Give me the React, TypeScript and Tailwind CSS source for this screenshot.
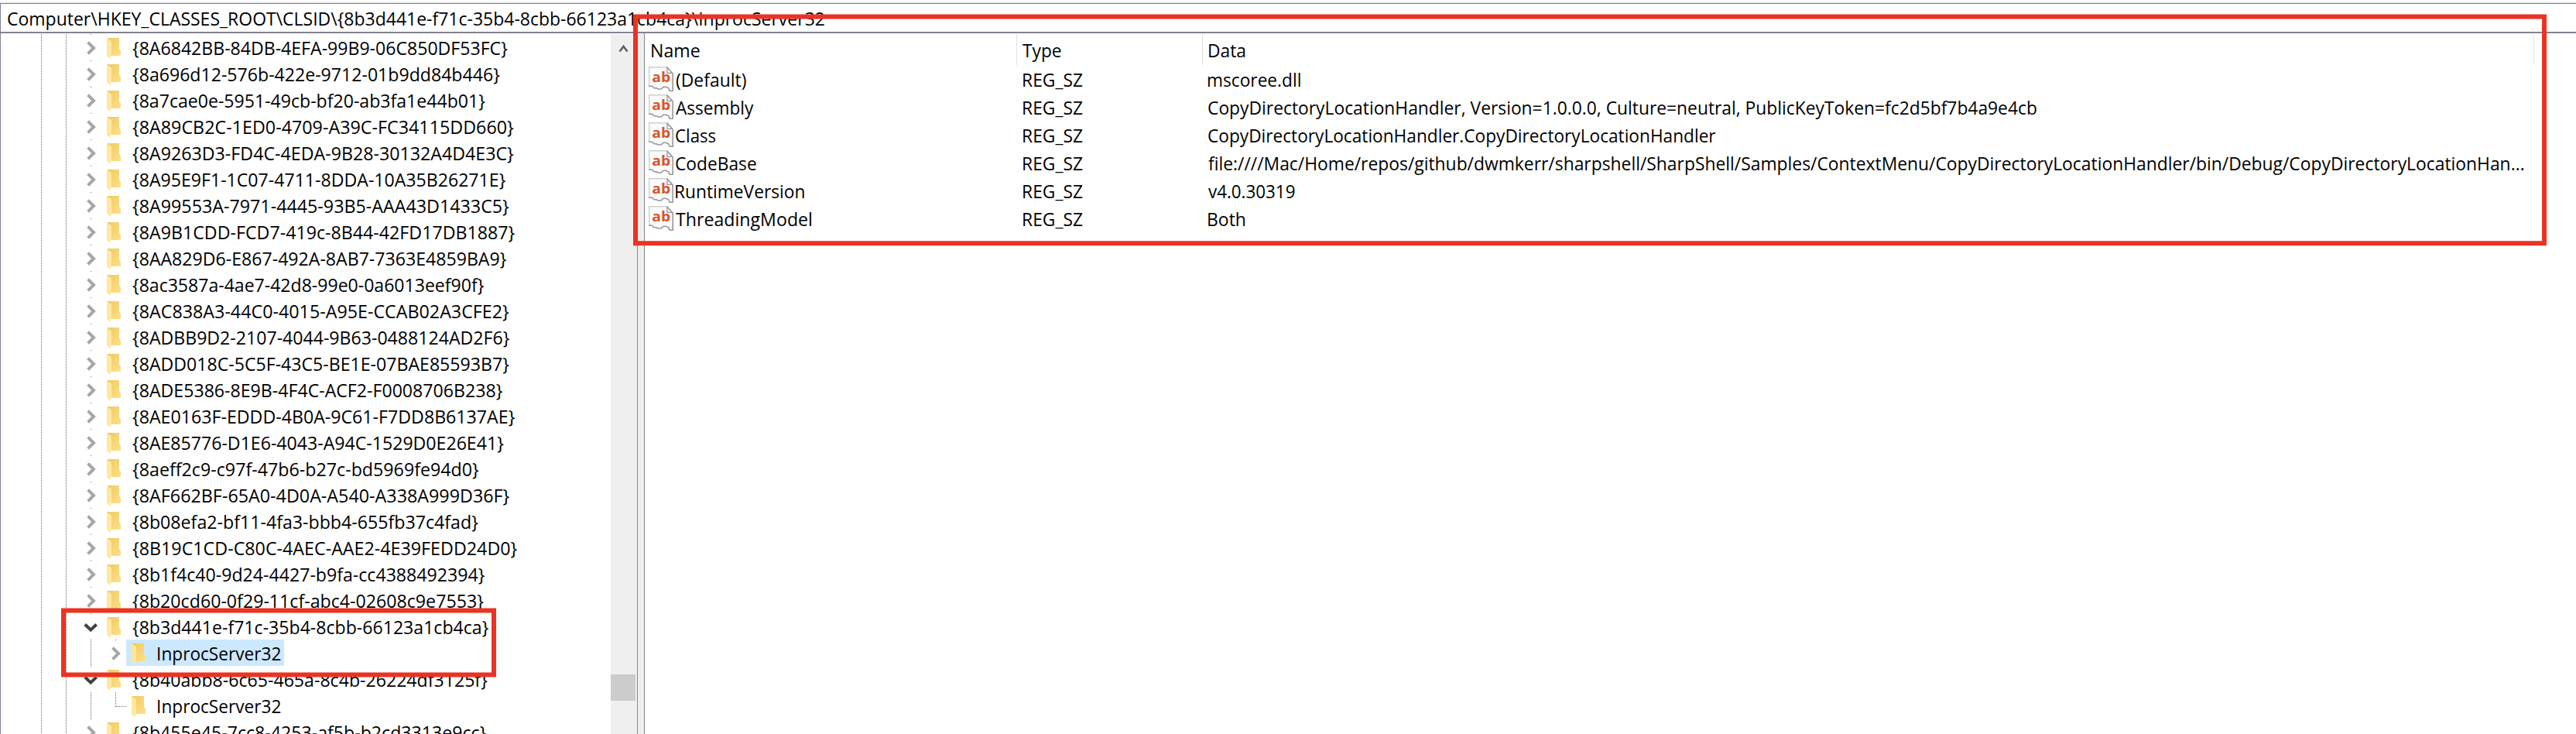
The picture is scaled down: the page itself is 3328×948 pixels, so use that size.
import { useLayoutEffect, useRef, useState } from "react";

type Kind = "closed" | "open" | "child" | "leaf";
type TreeNode = { label: string; width: number; kind: Kind; selected?: boolean };

const nodes: TreeNode[] = [
  { label: "{8A6842BB-84DB-4EFA-99B9-06C850DF53FC}", width: 485, kind: "closed" },
  { label: "{8a696d12-576b-422e-9712-01b9dd84b446}", width: 475, kind: "closed" },
  { label: "{8a7cae0e-5951-49cb-bf20-ab3fa1e44b01}", width: 456, kind: "closed" },
  { label: "{8A89CB2C-1ED0-4709-A39C-FC34115DD660}", width: 493, kind: "closed" },
  { label: "{8A9263D3-FD4C-4EDA-9B28-30132A4D4E3C}", width: 493, kind: "closed" },
  { label: "{8A95E9F1-1C07-4711-8DDA-10A35B26271E}", width: 482.5, kind: "closed" },
  { label: "{8A99553A-7971-4445-93B5-AAA43D1433C5}", width: 487, kind: "closed" },
  { label: "{8A9B1CDD-FCD7-419c-8B44-42FD17DB1887}", width: 494.5, kind: "closed" },
  { label: "{8AA829D6-E867-492A-8AB7-7363E4859BA9}", width: 483.5, kind: "closed" },
  { label: "{8ac3587a-4ae7-42d8-99e0-0a6013eef90f}", width: 454.5, kind: "closed" },
  { label: "{8AC838A3-44C0-4015-A95E-CCAB02A3CFE2}", width: 487, kind: "closed" },
  { label: "{8ADBB9D2-2107-4044-9B63-0488124AD2F6}", width: 487.5, kind: "closed" },
  { label: "{8ADD018C-5C5F-43C5-BE1E-07BAE85593B7}", width: 487, kind: "closed" },
  { label: "{8ADE5386-8E9B-4F4C-ACF2-F0008706B238}", width: 478.5, kind: "closed" },
  { label: "{8AE0163F-EDDD-4B0A-9C61-F7DD8B6137AE}", width: 494.5, kind: "closed" },
  { label: "{8AE85776-D1E6-4043-A94C-1529D0E26E41}", width: 480, kind: "closed" },
  { label: "{8aeff2c9-c97f-47b6-b27c-bd5969fe94d0}", width: 448, kind: "closed" },
  { label: "{8AF662BF-65A0-4D0A-A540-A338A999D36F}", width: 487.5, kind: "closed" },
  { label: "{8b08efa2-bf11-4fa3-bbb4-655fb37c4fad}", width: 447, kind: "closed" },
  { label: "{8B19C1CD-C80C-4AEC-AAE2-4E39FEDD24D0}", width: 497.5, kind: "closed" },
  { label: "{8b1f4c40-9d24-4427-b9fa-cc4388492394}", width: 455.5, kind: "closed" },
  { label: "{8b20cd60-0f29-11cf-abc4-02608c9e7553}", width: 454, kind: "closed" },
  { label: "{8b3d441e-f71c-35b4-8cbb-66123a1cb4ca}", width: 460.5, kind: "open" },
  { label: "InprocServer32", width: 159, kind: "child", selected: true },
  { label: "{8b40abb8-6c65-465a-8c4b-26224df3125f}", width: 459, kind: "open" },
  { label: "InprocServer32", width: 159, kind: "leaf" },
  { label: "{8b455e45-7cc8-4253-af5b-b2cd3313e9cc}", width: 457.5, kind: "closed" },
];

const values = [
  { name: "(Default)", nameWidth: 90.5, data: "mscoree.dll", dataWidth: 118.5 },
  { name: "Assembly", nameWidth: 100.5, data: "CopyDirectoryLocationHandler, Version=1.0.0.0, Culture=neutral, PublicKeyToken=fc2d5bf7b4a9e4cb", dataWidth: 1070.5 },
  { name: "Class", nameWidth: 52, data: "CopyDirectoryLocationHandler.CopyDirectoryLocationHandler", dataWidth: 656 },
  { name: "CodeBase", nameWidth: 103.5, data: "file:////Mac/Home/repos/github/dwmkerr/sharpshell/SharpShell/Samples/ContextMenu/CopyDirectoryLocationHandler/bin/Debug/CopyDirectoryLocationHan...", dataWidth: 1699.5 },
  { name: "RuntimeVersion", nameWidth: 166, data: "v4.0.30319", dataWidth: 112 },
  { name: "ThreadingModel", nameWidth: 175, data: "Both", dataWidth: 47.5 },
];

/* A single line of text condensed so that its glyphs span exactly `width` pixels. */
function Fit({ text, width }: { text: string; width: number }) {
  const ref = useRef<HTMLSpanElement>(null);
  const [transform, setTransform] = useState("none");
  useLayoutEffect(() => {
    const el = ref.current;
    const ctx = document.createElement("canvas").getContext("2d");
    if (!el || !ctx) return;
    const style = getComputedStyle(el);
    ctx.font = `${style.fontSize} ${style.fontFamily}`;
    const m = ctx.measureText(text);
    const ink = m.actualBoundingBoxLeft + m.actualBoundingBoxRight;
    setTransform(`scaleX(${width / ink}) translateX(${m.actualBoundingBoxLeft}px)`);
  }, [text, width]);
  return (
    <span className="block shrink-0 whitespace-nowrap" style={{ width }}>
      <span ref={ref} className="inline-block origin-left align-top" style={{ transform }}>
        {text}
      </span>
    </span>
  );
}

function Folder() {
  return (
    <svg width="20" height="34" viewBox="0 0 20 34" className="shrink-0">
      <defs>
        <linearGradient id="folderBack" x1="0" y1="0" x2="1" y2="1">
          <stop offset="0" stopColor="#f0c862" />
          <stop offset="1" stopColor="#fde08a" />
        </linearGradient>
        <linearGradient id="folderFlap" x1="0" y1="0" x2="1" y2="1">
          <stop offset="0" stopColor="#ffe794" />
          <stop offset="1" stopColor="#ffe9a3" />
        </linearGradient>
      </defs>
      <path d="M0 5H16V18.500L18 21.500V28H4V9Z" fill="url(#folderBack)" />
      <path d="M0 5L6 9.500V25.500L5 28V32L0 28.500Z" fill="url(#folderFlap)" />
    </svg>
  );
}

function Toggle({ kind }: { kind: Kind }) {
  return (
    <svg width="23" height="34" viewBox="0 0 23 34" className="shrink-0">
      {kind === "leaf" ? (
        <path d="M9.500 0V19M10 18.500H23" fill="none" stroke="#6a6a6a" strokeDasharray="1 1" />
      ) : (
        <rect x="9" y="0" width="1" height="1" fill="#6a6a6a" />
      )}
      {(kind === "closed" || kind === "child") && (
        <path d="M5.600 10.600L13 18L5.600 25.400" fill="none" stroke="#a6a6a6" strokeWidth="4" />
      )}
      {kind === "open" && (
        <path d="M1.800 14.500L9.200 21.600L16.600 14.500" fill="none" stroke="#404040" strokeWidth="4" />
      )}
    </svg>
  );
}

function Dots() {
  return <div className="w-px shrink-0 bg-[repeating-linear-gradient(180deg,#6a6a6a_0px,#6a6a6a_1px,transparent_1px,transparent_2px)]" />;
}

function TreeRow({ node }: { node: TreeNode }) {
  const nested = node.kind === "child" || node.kind === "leaf";
  return (
    <div className="flex h-[34px] shrink-0 pl-[52px]">
      <Dots />
      <div className="w-[31px] shrink-0" />
      <Dots />
      <div className="w-[22px] shrink-0" />
      {nested && (
        <div className="flex w-8 shrink-0 pl-[9px]">
          <Dots />
        </div>
      )}
      <Toggle kind={node.kind} />
      <div className={node.selected ? "flex bg-[#cce8ff] pr-[4px] pl-[7px]" : "flex pr-[4px] pl-[7px]"}>
        <Folder />
        <div className={nested ? "h-[34px] pl-[13.500px] leading-[36px]" : "h-[34px] pl-[12.500px] leading-[36px]"}>
          <Fit text={node.label} width={node.width} />
        </div>
      </div>
    </div>
  );
}

function StringIcon() {
  return (
    <svg width="32" height="32" viewBox="0 0 32 32" className="shrink-0">
      <path d="M0 0H24L32 9V31L26 31L25 27L19 26.500L16 29H12L10 28H7L4 25H0Z" fill="#fbfbfb" />
      <path d="M0.700 25V0.800H24" fill="none" stroke="#cfcfcf" strokeWidth="1.500" />
      <path d="M23.500 0.600L31.200 9V31.200H27L25.800 27.800L22 26.300H19L16 29H12L10 27.800H7L4.500 25.300H0" fill="none" stroke="#989898" strokeWidth="1.600" />
      <path d="M24 1.500V8.300H30.500" fill="none" stroke="#989898" strokeWidth="1.300" />
      <text x="4.300" y="20" textLength="23.800" lengthAdjust="spacingAndGlyphs" fill="#d9532c" className="font-['Open_Sans',sans-serif] text-[18.500px] font-bold">
        ab
      </text>
    </svg>
  );
}

function HeaderCell({ text, width, className }: { text: string; width: number; className: string }) {
  return (
    <div className={`h-10 shrink-0 border-r border-[#e2e2e2] leading-[42px] ${className}`}>
      <Fit text={text} width={width} />
    </div>
  );
}

export default function App() {
  return (
    <div className="relative flex h-[948px] w-[3328px] flex-col overflow-hidden bg-white font-['Open_Sans','Noto_Sans',sans-serif] text-[23.500px] text-black">
      <div className="mt-[2px] h-[2px] shrink-0 bg-[#f0f0f0]" />
      <div className="h-[39px] shrink-0 border-t border-b-2 border-l border-t-[#7a7a7a] border-b-[#828090] border-l-[#828090] pl-[9px] leading-[38px]">
        <Fit text="Computer\HKEY_CLASSES_ROOT\CLSID\{8b3d441e-f71c-35b4-8cbb-66123a1cb4ca}\InprocServer32" width={1055.5} />
      </div>

      <div className="flex min-h-0 flex-1">
        <div className="flex w-[789px] shrink-0 flex-col overflow-hidden border-l border-[#828090] pt-px">
          {nodes.map((node, i) => (
            <TreeRow key={i} node={node} />
          ))}
        </div>
        <div className="mt-px flex w-[34px] shrink-0 flex-col bg-[#efefef]">
          <svg width="34" height="34" viewBox="0 0 34 34" className="shrink-0">
            <path d="M11.500 22.500L16.500 16L21.500 22.500" fill="none" stroke="#606060" strokeWidth="2.600" />
          </svg>
          <div className="mt-[793px] h-[34px] w-8 shrink-0 bg-[#cccccc]" />
        </div>
        <div className="w-[10px] shrink-0 border-x border-[#828790] bg-[#efefef]" />

        <div className="flex min-w-0 flex-1 flex-col pt-px">
          <div className="flex h-10 shrink-0">
            <HeaderCell text="Name" width={61.5} className="w-[481px] pl-[9px]" />
            <HeaderCell text="Type" width={49.5} className="w-[240px] pl-[7px]" />
            <HeaderCell text="Data" width={47} className="w-[1720px] pl-[8px]" />
          </div>
          {values.map((v) => (
            <div key={v.name} className="flex h-9 shrink-0 pl-[5px]">
              <div className="flex w-[484px] shrink-0 pt-[2px]">
                <StringIcon />
                <div className="-mt-[2px] pl-[2.500px] leading-[38px]">
                  <Fit text={v.name} width={v.nameWidth} />
                </div>
              </div>
              <div className="w-[238.500px] shrink-0 leading-[38px]">
                <Fit text="REG_SZ" width={76.5} />
              </div>
              <div className="leading-[38px]">
                <Fit text={v.data} width={v.dataWidth} />
              </div>
            </div>
          ))}
        </div>
      </div>

      <svg width="3328" height="948" viewBox="0 0 3328 948" className="pointer-events-none absolute inset-0">
        <rect x="821" y="21.500" width="2466" height="292.700" fill="none" stroke="#eb3323" strokeWidth="6" />
        <rect x="82" y="788.500" width="556" height="83" fill="none" stroke="#eb3323" strokeWidth="6" />
      </svg>
    </div>
  );
}
